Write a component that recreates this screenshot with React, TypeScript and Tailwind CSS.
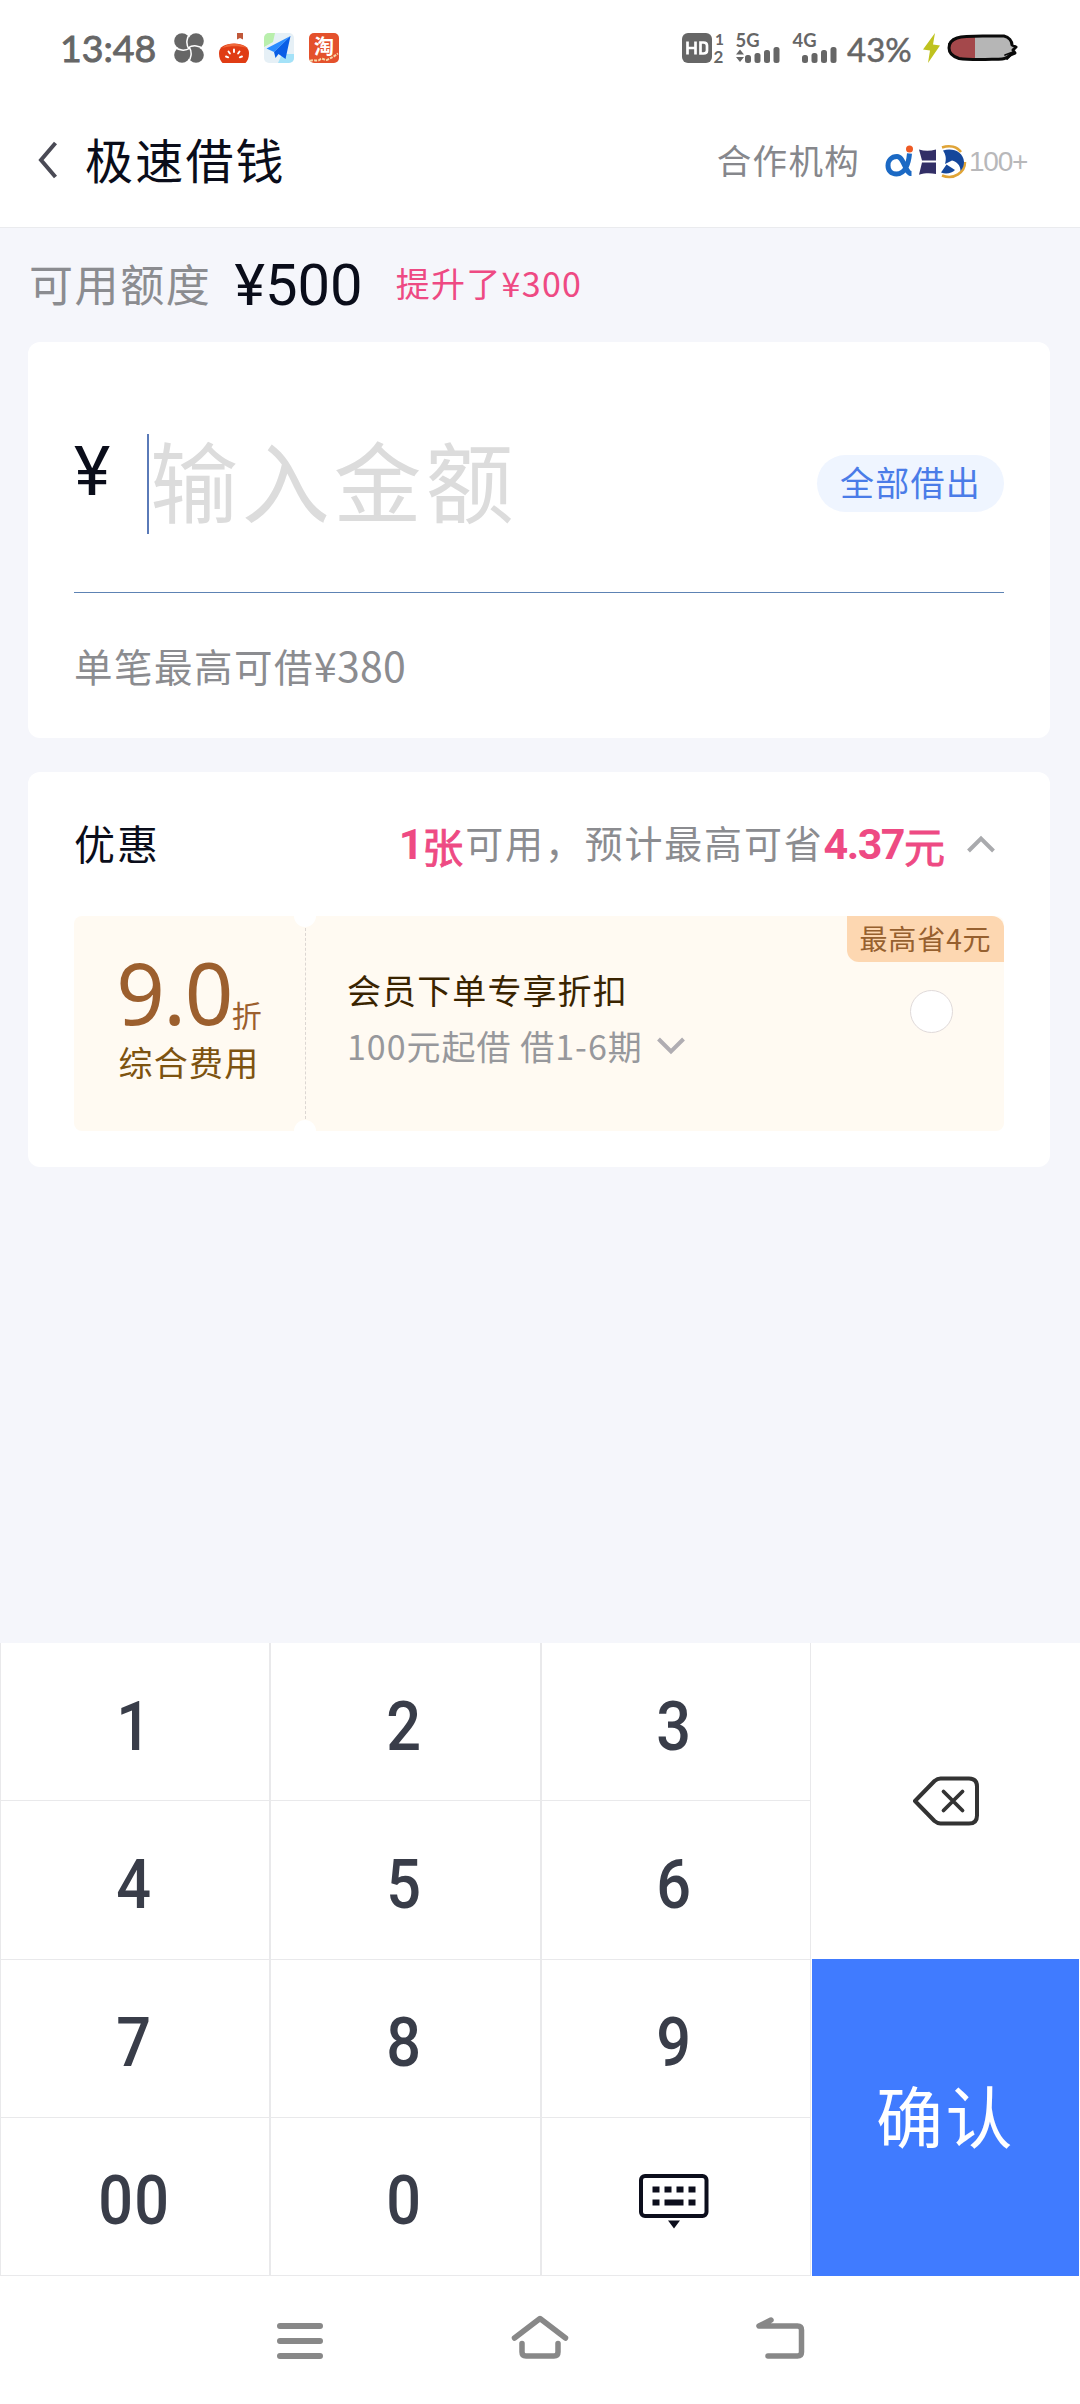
import React from "react";

const cjk = "font-['Noto_Sans_CJK_SC',sans-serif]";

function PinwheelIcon() {
  return (
    <svg width="30" height="30" viewBox="0 0 30 30">
      <g fill="#666">
        <circle cx="8" cy="8" r="7.8" />
        <circle cx="22" cy="8" r="7.8" />
        <circle cx="8" cy="22" r="7.8" />
        <circle cx="22" cy="22" r="7.8" />
        <rect x="8" y="8" width="14" height="14" />
      </g>
      <g fill="none" stroke="#fff" strokeWidth="1.5">
        <path d="M15 16 C11.5 11 12.5 4.500 16.500 0" />
        <path d="M14 15 C19 11.500 25.500 12.500 30 16.500" />
        <path d="M15 14 C18.500 19 17.500 25.500 13.500 30" />
        <path d="M16 15 C11 18.500 4.500 17.500 0 13.500" />
      </g>
    </svg>
  );
}

function TomatoIcon() {
  return (
    <svg width="30" height="30" viewBox="0 0 30 30">
      <path d="M18 0h6v6.500l-3-1.500-3 1.500z" fill="#c0583a" />
      <path d="M0 20C0 14 6 10.500 15 10.500S30 14 30 20c0 5-1.500 8-3.500 10h-23C1.500 28 0 25 0 20z" fill="#e03c14" />
      <path d="M3 15c3-3 8-4.500 13-4.300 5 .2 9 1.600 12 4.300-7-2.500-17-2.500-25 0z" fill="#f0683a" />
      <g stroke="#fff" strokeWidth="1.900" strokeLinecap="round">
        <path d="M15 16.500v2.500M9.500 18.500l1.400 2M20.500 18.500l-1.400 2M7 23.500l2.200.8M23 23.500l-2.200.8" />
      </g>
    </svg>
  );
}

function PlaneIcon() {
  return (
    <svg width="30" height="30" viewBox="0 0 30 30">
      <rect width="30" height="30" rx="5" fill="#e6f0f6" />
      <path d="M0 5a5 5 0 0 1 5-5h6l-2 9-9 5z" fill="#b9efac" />
      <path d="M14 30l4-9h12v4a5 5 0 0 1-5 5z" fill="#a4e2f8" />
      <path d="M26.500 3L2.500 15.500l7.500 3.500z" fill="#2b8cff" />
      <path d="M26.500 3L10 19l1.500 6 3-4 7 5z" fill="#0a5ee6" />
    </svg>
  );
}

function TaoIcon() {
  return (
    <svg width="30" height="30" viewBox="0 0 30 30">
      <rect width="30" height="30" rx="5" fill="#e4512c" />
      <text x="15" y="21" fontSize="20" fontWeight="700" fill="#fff" textAnchor="middle" fontFamily="Noto Sans CJK SC, sans-serif">
        淘
      </text>
      <path d="M1 28c4-2 7 1 10-1.500s5 2 8 0 5-2 10-6" fill="none" stroke="#f7d9a8" strokeWidth="2" strokeDasharray="3 1.200" />
    </svg>
  );
}

function HdIcon() {
  return (
    <svg width="43" height="30" viewBox="0 0 43 30" className="overflow-visible">
      <rect width="30" height="30" rx="6" fill="#666" />
      <path d="M5.500 8.500v13M13.500 8.500v13M5.500 15h8M18.500 9.500v11h3q3.500 0 3.500-3v-5q0-3-3.500-3z" fill="none" stroke="#fff" strokeWidth="2.700" />
      <text x="33" y="11.500" fontSize="15.500" fontWeight="700" fill="#666" fontFamily="Lato, sans-serif">1</text>
      <text x="31.500" y="29.500" fontSize="17" fontWeight="700" fill="#666" fontFamily="Lato, sans-serif">2</text>
    </svg>
  );
}

function Signal({ label, arrows }: { label: string; arrows?: boolean }) {
  return (
    <svg width="44" height="30" viewBox="0 0 44 30" className="overflow-visible">
      <text x="-0.500" y="14" fontSize="19.500" fontWeight="700" fill="#666" textLength="24" lengthAdjust="spacingAndGlyphs" fontFamily="Lato, sans-serif">
        {label}
      </text>
      {arrows && <path d="M0 21.500l4-5 4 5zM0 24l4 5 4-5z" fill="#666" />}
      <g fill="#666">
        <rect x="9" y="22" width="6" height="8" rx="2.500" />
        <rect x="18.500" y="20" width="6" height="10" rx="2.500" />
        <rect x="28" y="17" width="6" height="13" rx="2.500" />
        <rect x="37.500" y="14" width="6" height="16" rx="2.500" />
      </g>
    </svg>
  );
}

function Battery() {
  return (
    <svg width="72" height="30" viewBox="0 0 72 30">
      <path d="M11 5C5 6 2 10 2 15s4 10 11 11h16V3.500z" fill="#a4484b" />
      <path d="M28 3.500h30c5 1 8 5 9 10l-2 9c-4 3-6 4-10 4H28z" fill="#b6b6b6" />
      <path d="M10 5C20 2 35 3.500 57 3c5 1 8 5 8 9l4 2-3 3 2 3-5 2c-4 4-7 4-12 4.200-14 .3-28 1-39-.7C4 23 2 19 2 15S4 7 10 5z" fill="none" stroke="#0a0a0a" strokeWidth="3" strokeLinejoin="round" />
      <path d="M2 11l5-5M58 22l8-3M60 26l5-5" stroke="#0a0a0a" strokeWidth="1.800" strokeLinecap="round" />
    </svg>
  );
}

function StatusBar() {
  return (
    <div className="flex h-24 items-center bg-white pl-[60px] pr-[61px] text-[#666]">
      <span className="w-[114px] whitespace-nowrap font-['Lato',sans-serif] text-[37.5px] leading-none [-webkit-text-stroke:0.9px]">13:48</span>
      <div className="flex gap-[15px]">
        <PinwheelIcon />
        <TomatoIcon />
        <PlaneIcon />
        <TaoIcon />
      </div>
      <div className="ml-auto flex items-center">
        <HdIcon />
        <div className="ml-[11px]"><Signal label="5G" arrows /></div>
        <div className="ml-[13px]"><Signal label="4G" /></div>
        <span className="ml-[10px] w-[76px] whitespace-nowrap pt-[3px] font-['Lato',sans-serif] text-[33px] leading-none [-webkit-text-stroke:0.5px]">43%</span>
        <svg width="17" height="30" viewBox="0 0 17 30">
          <path d="M12 0L0 16.500l7 1L5 30 17 12.500l-7-1z" fill="#bfc21f" />
        </svg>
        <div className="ml-[7px]"><Battery /></div>
      </div>
    </div>
  );
}

function PartnerLogos() {
  return (
    <svg width="82" height="36" viewBox="0 0 82 36">
      <path d="M24.500 9.500c-.8 9-4 20.500-13 20.500C6 30 3 26.500 3 21.500S6.500 12.500 12 12.500c7 0 8 17 14.500 17" fill="none" stroke="#1b69c4" strokeWidth="5" />
      <circle cx="24.500" cy="5" r="3.500" fill="#ee5a24" />
      <path d="M34 5.500c5.500 1.600 11 1.600 17 0v11H37zM37 18.500h14V30c-6-1-11-1-17 .8z" fill="#322e66" />
      <path d="M57 3.500C65 .8 72 3 76 8" fill="none" stroke="#e0a437" strokeWidth="2.600" />
      <path d="M80 18c0 10-11 18.500-23 13.500" fill="none" stroke="#e0a437" strokeWidth="2.600" />
      <path d="M58 6.500c10-3 20.500 1.500 21 11.500 0 4-1.300 6.500-3.500 9 0-6-4-9.500-8.500-10.500l-7 3.500c1.500-5 1-9-2-13.500z" fill="#15479b" />
      <path d="M56 28.500l5.500-8 8.500 5.500c-3 3-8.500 4.500-14 2.500z" fill="#15479b" />
    </svg>
  );
}

function Header() {
  return (
    <header className="flex h-[132px] items-center border-b border-[#eaebee] bg-white pl-[38px] pr-[51px]">
      <svg width="20" height="38" viewBox="0 0 20 38" className="mb-1">
        <path d="M17.500 2L3 19l14.500 17" fill="none" stroke="#4a4a55" strokeWidth="4" />
      </svg>
      <h1 className="ml-[27px] pb-[7px] text-[48px] leading-none tracking-[2.200px] text-[#0a0d1a]">极速借钱</h1>
      <span className="ml-auto pb-1 text-[34.500px] leading-none tracking-[1.300px] text-[#86878c]">合作机构</span>
      <div className="ml-[25px] w-[84px]"><PartnerLogos /></div>
      <span className="w-[60px] whitespace-nowrap font-['Liberation_Sans',sans-serif] text-[28px] leading-none tracking-[-1.200px] text-[#b8b8ba]">100+</span>
    </header>
  );
}

function Quota() {
  return (
    <div className="flex h-[114px] items-center pl-[29px] leading-none">
      <span className="pb-[5px] text-[44px] tracking-[1.600px] text-[#8b8c90]">可用额度</span>
      <span className="ml-[23px] font-['Roboto',sans-serif] text-[58px] text-[#0a0d1a]">¥500</span>
      <span className="ml-[33px] pb-[4px] text-[34px] tracking-[1.300px] text-[#ee4a83]">提升了¥300</span>
    </div>
  );
}

function AmountCard() {
  return (
    <section className="mr-[30px] ml-7 flex h-[396px] flex-col rounded-[12px] bg-white px-[46px]">
      <div className="flex h-[251px] items-center border-b border-[#5d83b4] pt-[33px]">
        <span className="w-[73px] pb-[24px] font-['Roboto',sans-serif] text-[69px] leading-none text-[#0a0d1a]">¥</span>
        <span className="h-[100px] w-[2px] bg-[#5a7ab8]" />
        <span className="ml-px pb-[11px] text-[88px] leading-none tracking-[3.800px] text-[#dcdcdc]">输入金额</span>
        <button className="ml-auto flex h-[57px] w-[187px] items-center justify-center rounded-full bg-[#eff5ff] pb-1 text-[34px] leading-none tracking-[1.300px] text-[#4a7ce8]">
          全部借出
        </button>
      </div>
      <p className="pt-[51px] text-[38.500px] leading-none tracking-[1.500px] text-[#8b8c90]">
        单笔最高可借<span className="text-[41px] leading-none tracking-[0.200px]">¥380</span>
      </p>
    </section>
  );
}

function Coupon() {
  return (
    <div className="flex h-[215px]">
      <div className="flex w-[231px] flex-col items-center rounded-[8px] bg-[#fffaf2] pt-[32px] pr-px">
        <div className="flex h-[88px] items-end text-[#9c5f2e]">
          <span className="font-['Noto_Sans',sans-serif] text-[85px] leading-[87px] tracking-[-1.500px]">9.0</span>
          <span className="pb-[7px] text-[30px] leading-none">折</span>
        </div>
        <span className="mt-[9px] text-[34px] leading-none tracking-[1.200px] text-[#7d5310]">综合费用</span>
      </div>
      <div className="relative flex flex-1 rounded-[8px] bg-[#fffaf2] pl-[42px]">
        <div className="absolute top-3 bottom-3 left-0 border-l border-dashed border-[#dcd6d2]" />
        <div className="absolute -top-[11px] -left-[11px] size-[22px] rounded-full bg-white" />
        <div className="absolute -bottom-[11px] -left-[11px] size-[22px] rounded-full bg-white" />
        <div className="pt-[57px]">
          <p className="text-[34px] leading-none tracking-[1.100px] text-[#3a2400]">会员下单专享折扣</p>
          <div className="mt-[22px] flex items-center">
            <p className="text-[34px] leading-none tracking-[1px] text-[#97989c]">100元起借 借1-6期</p>
            <svg width="28" height="18" viewBox="0 0 28 18" className="ml-[14px]">
              <path d="M1.500 2L14 14.500 26.500 2" fill="none" stroke="#b0adb2" strokeWidth="4" />
            </svg>
          </div>
        </div>
        <div className="ml-auto flex flex-col items-end">
          <span className="flex h-[46px] w-[157px] items-center justify-center rounded-tr-[12px] rounded-bl-[12px] bg-[#fdd7b1] pb-[3px] text-[28px] leading-none tracking-[0.900px] text-[#96602f]">
            最高省4元
          </span>
          <span className="mt-7 mr-[51px] size-[43px] rounded-full border border-[#e0dada] bg-white" />
        </div>
      </div>
    </div>
  );
}

function OfferCard() {
  return (
    <section className="mt-[34px] mr-[30px] ml-7 h-[395px] rounded-[12px] bg-white px-[46px]">
      <div className="flex h-[144px] items-center leading-none">
        <span className="pb-[4px] text-[41px] tracking-[2px] text-[#0a0d1a]">优惠</span>
        <div className="ml-auto flex items-center">
          <span className="flex items-center text-[#ee4a83]">
            <span className="mr-[-1px] font-['Roboto',sans-serif] text-[43px] font-bold">1</span>
            <span className="mr-[2px] pt-[2px] text-[41px] [-webkit-text-stroke:0.9px]">张</span>
          </span>
          <span className="pb-[5px] text-[38px] tracking-[1.800px] text-[#8b8c90]">可用，预计最高可省</span>
          <span className="flex items-center text-[#ee4a83]">
            <span className="font-['Roboto',sans-serif] text-[43px] font-bold tracking-[-1.500px]">4.37</span>
            <span className="pt-[2px] text-[41px] [-webkit-text-stroke:0.9px]">元</span>
          </span>
          <svg width="28" height="18" viewBox="0 0 28 18" className="mr-[9px] ml-[22px]">
            <path d="M1.500 16L14 3.500 26.500 16" fill="none" stroke="#a9aaad" strokeWidth="4" />
          </svg>
        </div>
      </div>
      <Coupon />
    </section>
  );
}

function KeyboardIcon() {
  return (
    <svg width="70" height="56" viewBox="0 0 70 56" className="mt-3 mr-[3px]">
      <rect x="2" y="2" width="65.500" height="40" rx="4" fill="none" stroke="#0c0e1c" strokeWidth="4" />
      <g fill="#0c0e1c">
        <rect x="13.500" y="12.500" width="7" height="6" />
        <rect x="25.500" y="12.500" width="7" height="6" />
        <rect x="37.500" y="12.500" width="7" height="6" />
        <rect x="49.500" y="12.500" width="7" height="6" />
        <rect x="13.500" y="25.500" width="7" height="6" />
        <rect x="25.500" y="25.500" width="19" height="6" />
        <rect x="49.500" y="25.500" width="7" height="6" />
        <path d="M29 46.500h12l-6 8z" />
      </g>
    </svg>
  );
}

const keys = ["1", "2", "3", "4", "5", "6", "7", "8", "9", "00", "0", "hide"];

function Keypad() {
  return (
    <div className="flex h-[633px] bg-white">
      <div className="grid w-[811px] grid-cols-3 grid-rows-4">
        {keys.map((k) => (
          <div key={k} className="flex items-center justify-center border-x border-b border-[#e9e9eb]">
            {k === "hide" ? (
              <KeyboardIcon />
            ) : (
              <span className="scale-x-[0.9] pt-[10px] pr-[3px] font-['Roboto',sans-serif] text-[68px] leading-none font-medium tracking-[1.500px] text-[#393d49]">
                {k}
              </span>
            )}
          </div>
        ))}
      </div>
      <div className="flex flex-1 flex-col pr-px pl-px">
        <div className="flex h-[316px] items-center justify-center">
          <svg width="68" height="50" viewBox="0 0 68 50" className="mb-px">
            <path d="M3 25L22.500 5q3-2.500 6-2.500H57q8 0 8 8v29q0 8-8 8H28.500q-3 0-6-2.500z" fill="none" stroke="#333" strokeWidth="4" strokeLinejoin="round" />
            <path d="M31.500 15.500l19 19M50.500 15.500l-19 19" stroke="#333" strokeWidth="3.800" strokeLinecap="round" />
          </svg>
        </div>
        <button className="flex flex-1 items-center justify-center bg-[#407bff] pb-[8px] text-[67px] leading-none tracking-[2.500px] text-white">确认</button>
      </div>
    </div>
  );
}

function NavBar() {
  return (
    <nav className="flex h-[128px] items-center justify-center gap-[184px] bg-white pb-[2px]">
      <svg width="60" height="60" viewBox="0 0 60 60" fill="none" stroke="#888" strokeWidth="6" strokeLinecap="round">
        <path d="M10 17h40M10 32h40M10 47h40" />
      </svg>
      <svg width="60" height="60" viewBox="0 0 60 60" fill="none" stroke="#888" strokeWidth="5.500" strokeLinecap="round" strokeLinejoin="round" className="-mx-1">
        <path d="M4.500 29L30 9.500 55.500 29M12 34.500V43q0 4 4 4h28q4 0 4-4v-8.500" />
      </svg>
      <svg width="60" height="60" viewBox="0 0 60 60" fill="none" stroke="#888" strokeWidth="5.500" strokeLinecap="round" strokeLinejoin="round">
        <path d="M21 11L9 17h38.500q4 0 4 4v22q0 4-4 4H18" />
      </svg>
    </nav>
  );
}

export default function App() {
  return (
    <div className={`flex h-[2404px] w-[1080px] flex-col overflow-hidden bg-[#f5f6fb] ${cjk}`}>
      <StatusBar />
      <Header />
      <Quota />
      <AmountCard />
      <OfferCard />
      <div className="flex-1" />
      <Keypad />
      <NavBar />
    </div>
  );
}
